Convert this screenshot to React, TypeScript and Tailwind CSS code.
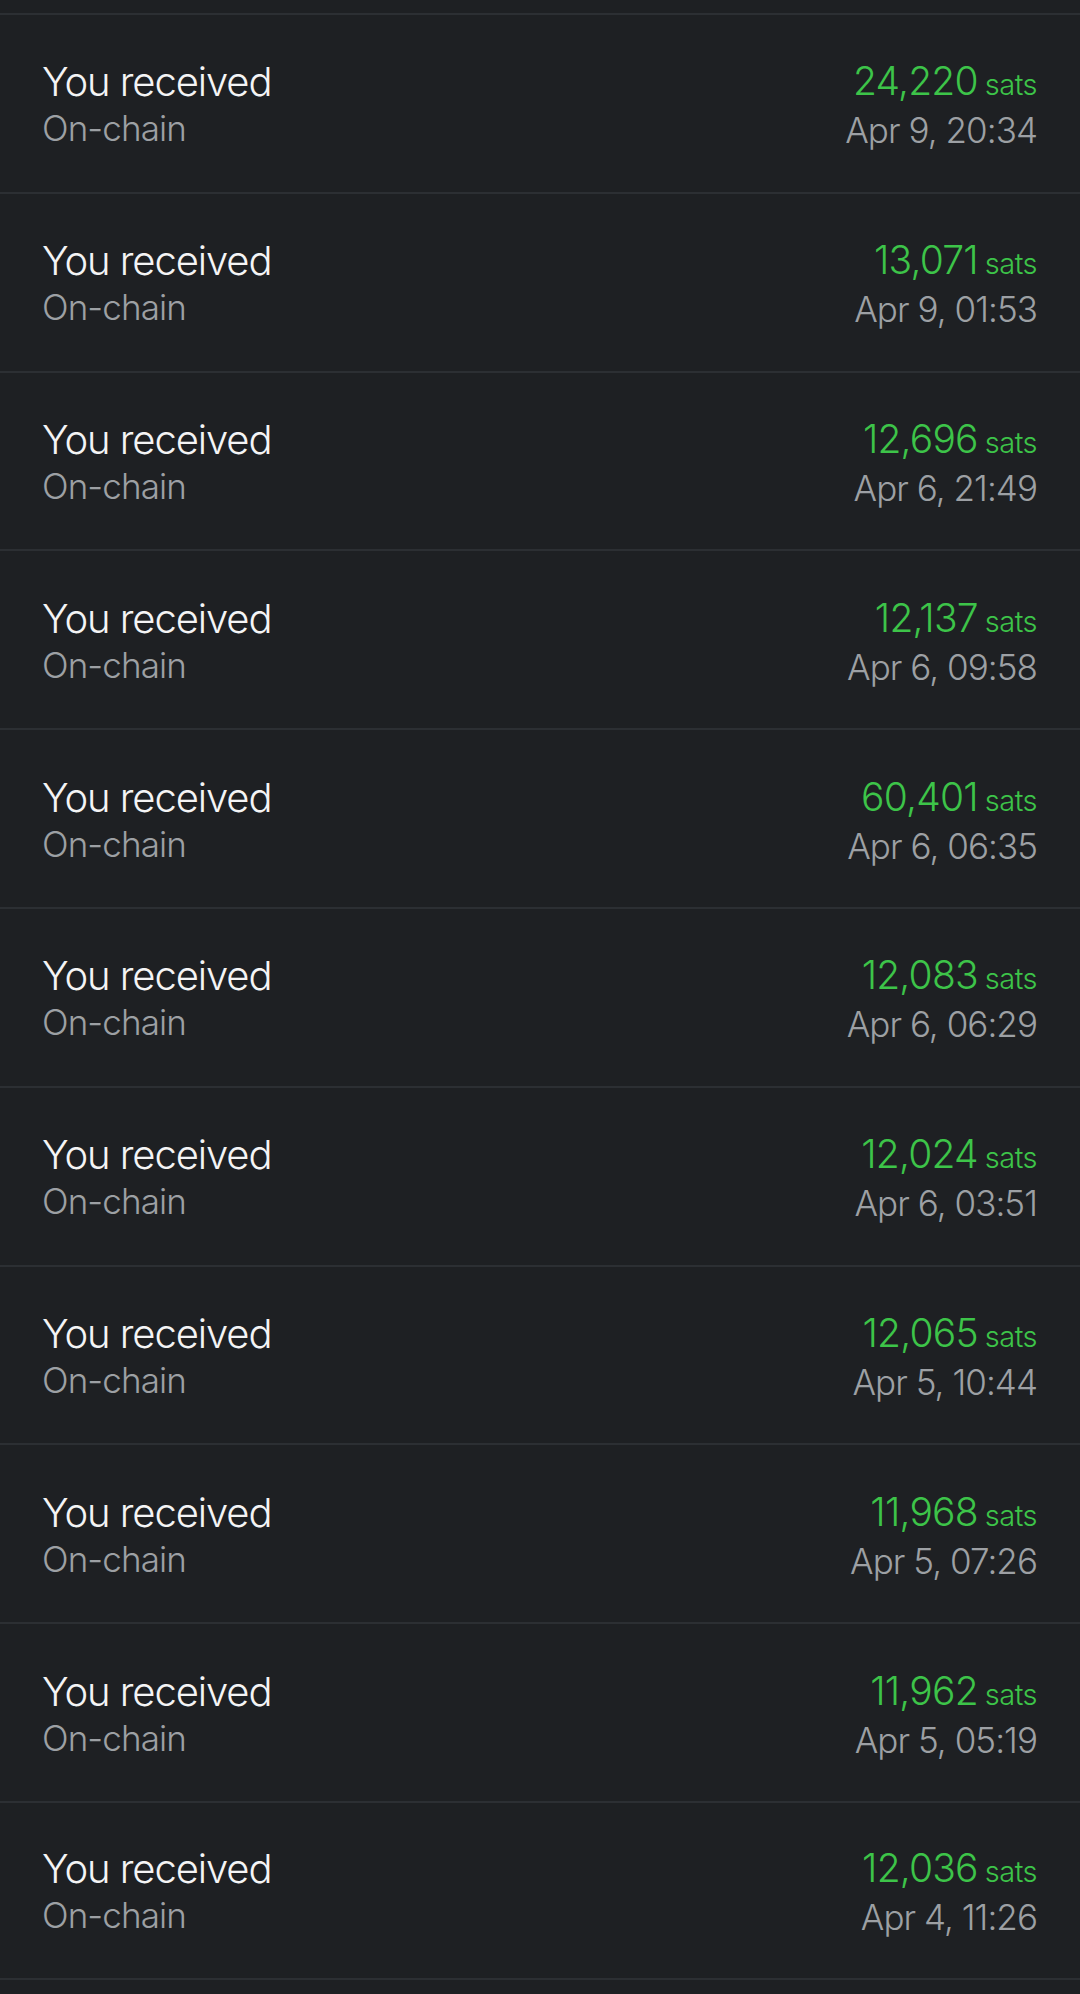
import React from "react";

const rows: [string, string][] = [
  ["24,220", "Apr 9, 20:34"],
  ["13,071", "Apr 9, 01:53"],
  ["12,696", "Apr 6, 21:49"],
  ["12,137", "Apr 6, 09:58"],
  ["60,401", "Apr 6, 06:35"],
  ["12,083", "Apr 6, 06:29"],
  ["12,024", "Apr 6, 03:51"],
  ["12,065", "Apr 5, 10:44"],
  ["11,968", "Apr 5, 07:26"],
  ["11,962", "Apr 5, 05:19"],
  ["12,036", "Apr 4, 11:26"],
];

export default function App() {
  return (
    <div
      className="min-h-[1994px] w-[1080px] bg-[#1e2023] pt-[13px]"
      style={{ fontFamily: "Inter, 'Liberation Sans', sans-serif" }}
    >
      {rows.map(([amt, date], i) => (
        <div
          key={i}
          className={`flex h-[178.8px] items-center justify-between border-t-2 border-[#2c2f33] pl-[42px] pr-[43px] pt-[4px] ${
            i === rows.length - 1 ? "border-b-2" : ""
          }`}
        >
          <div className="flex flex-col">
            <div className="text-[40px] font-[350] leading-[46px] tracking-[-1.1px] text-[#f4f4f5]">
              You received
            </div>
            <div className="text-[35px] font-[350] leading-[46px] tracking-[-0.9px] text-[#9da0a4]">
              On-chain
            </div>
          </div>
          <div className="flex flex-col items-end">
            <div className="flex items-baseline leading-[46px] text-[#3dc449]">
              <span className="translate-y-[1px] text-[39px] font-[350] tracking-[-0.8px]">{amt}</span>
              <span className="ml-[7px] translate-y-[1px] text-[29px] font-[350] tracking-[-0.5px]">sats</span>
            </div>
            <div className="text-[35px] font-[350] leading-[46px] tracking-[-0.95px] text-[#9da0a4]">
              {date}
            </div>
          </div>
        </div>
      ))}
    </div>
  );
}
